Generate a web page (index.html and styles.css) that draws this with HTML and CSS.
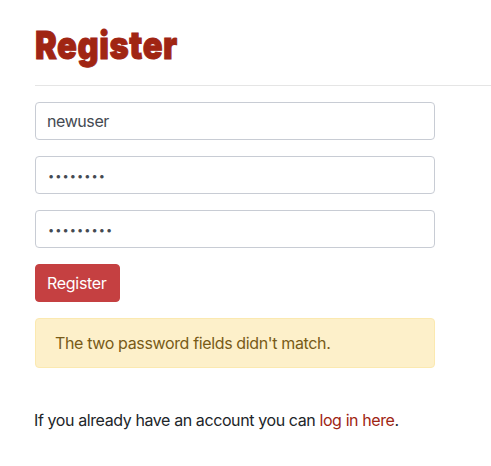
FILE: index.html
```html
<!DOCTYPE html>
<html lang="en">
<head>
<meta charset="utf-8">
<title>Register</title>
<link rel="stylesheet" href="styles.css">
</head>
<body>
<main class="page">
<h1 class="title"><span class="title-text">Register</span></h1>
<hr class="rule">
<form class="form">
<input class="field" type="text" value="newuser" aria-label="Username">
<input class="field password" type="text" value="••••••••" aria-label="Password">
<input class="field password" type="text" value="•••••••••" aria-label="Confirm password">
<button class="button" type="button">Register</button>
<div class="alert" role="alert">The two password fields didn't match.</div>
</form>
<p class="login">If you already have an account you can <a class="link" href="#">log in here</a>.</p>
</main>
</body>
</html>
```
FILE: styles.css
```css
* { box-sizing: border-box; }
body { margin: 0; background: #fff; color: #212529; font: 16px/24px Inter, sans-serif; overflow: hidden; }
.page { padding: 22px 0 0 35px; }
.title { margin: 0; height: 63px; color: #a02513; font: 900 39px/46px Inter, sans-serif; white-space: nowrap; }
.title-text { display: inline-block; transform-origin: left; transform: scaleX(.84); letter-spacing: .65px; -webkit-text-stroke: 1px #a02513; }
.rule { margin: 0 0 16px; border: 0; border-top: 1px solid #e5e5e5; }
.form { width: 400px; display: flex; flex-direction: column; align-items: flex-start; gap: 16px; }
.field { width: 100%; height: 38px; padding: 6px 11px; border: 1px solid #c8ccd4; border-radius: 4px; color: #444a52; background: #fff; font: inherit; letter-spacing: -.42px; }
.password { padding-left: 12px; padding-top: 8px; padding-bottom: 6px; font-size: 11px; letter-spacing: 1.05px; }
.button { height: 38px; padding: 6px 12px 6px 11px; border: 1px solid #c54041; border-radius: 4px; color: #fff; background: #c54041; font: inherit; letter-spacing: -.3px; }
.alert { width: 100%; height: 50px; padding: 12px 19px; border: 1px solid #fbe9b0; border-radius: 4px; color: #785b17; background: #fdf0ca; letter-spacing: -.36px; }
.login { margin: 40px 0 0 -1px; letter-spacing: -.4px; white-space: nowrap; }
.link { color: #a02513; text-decoration: none; }
```
